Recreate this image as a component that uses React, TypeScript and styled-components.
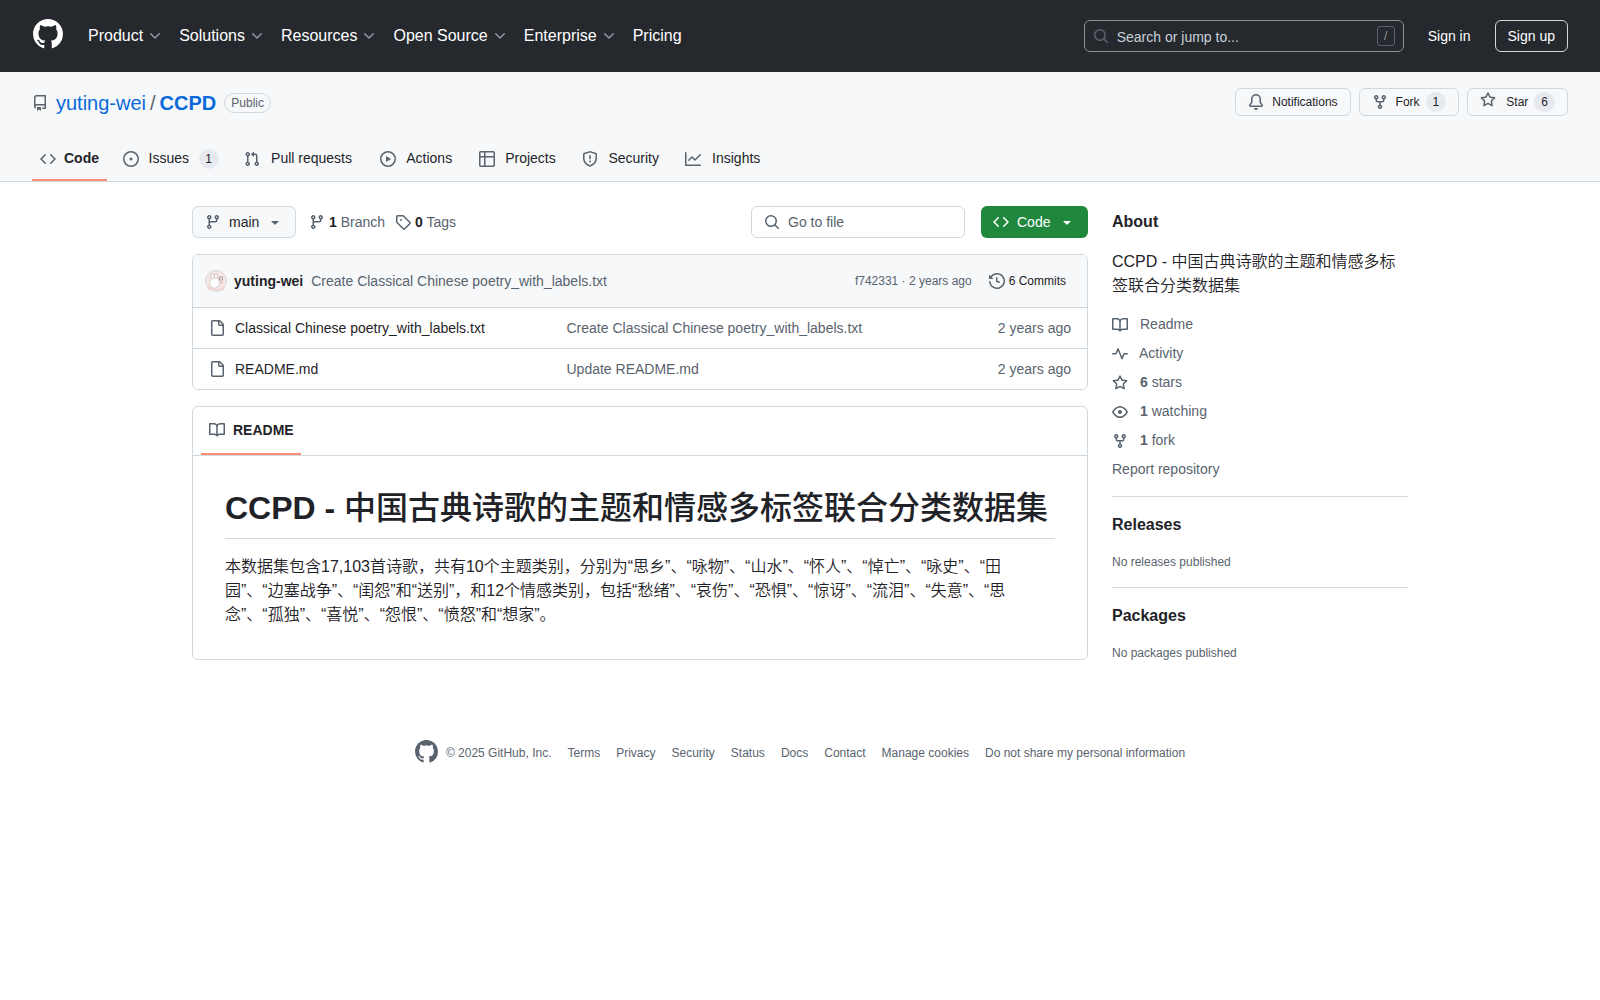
import styled, { createGlobalStyle } from 'styled-components';

const paths: Record<string, string> = {
  mark: 'M8 0c4.42 0 8 3.58 8 8a8.013 8.013 0 0 1-5.45 7.59c-.4.08-.55-.17-.55-.38 0-.27.01-1.13.01-2.2 0-.75-.25-1.23-.54-1.48 1.78-.2 3.65-.88 3.65-3.95 0-.88-.31-1.59-.82-2.15.08-.2.36-1.02-.08-2.12 0 0-.67-.22-2.2.82-.64-.18-1.32-.27-2-.27-.68 0-1.36.09-2 .27-1.53-1.03-2.2-.82-2.2-.82-.44 1.1-.16 1.92-.08 2.12-.51.56-.82 1.28-.82 2.15 0 3.06 1.86 3.75 3.64 3.95-.23.2-.44.55-.51 1.07-.46.21-1.61.55-2.33-.66-.15-.24-.6-.83-1.23-.82-.67.01-.27.38.01.53.34.19.73.9.82 1.13.16.45.68 1.31 2.69.94 0 .67.01 1.3.01 1.49 0 .21-.15.45-.55.38A7.995 7.995 0 0 1 0 8c0-4.42 3.58-8 8-8Z',
  repo: 'M2 2.5A2.5 2.5 0 0 1 4.5 0h8.75a.75.75 0 0 1 .75.75v12.5a.75.75 0 0 1-.75.75h-2.5a.75.75 0 0 1 0-1.5h1.75v-2h-8a1 1 0 0 0-.714 1.7.75.75 0 1 1-1.072 1.05A2.495 2.495 0 0 1 2 11.5Zm10.5-1h-8a1 1 0 0 0-1 1v6.708A2.486 2.486 0 0 1 4.5 9h8ZM5 12.25a.25.25 0 0 1 .25-.25h3.5a.25.25 0 0 1 .25.25v3.25a.25.25 0 0 1-.4.2l-1.45-1.087a.249.249 0 0 0-.3 0L5.4 15.7a.25.25 0 0 1-.4-.2Z',
  code: 'm11.28 3.22 4.25 4.25a.75.75 0 0 1 0 1.06l-4.25 4.25a.749.749 0 0 1-1.275-.326.749.749 0 0 1 .215-.734L13.94 8l-3.72-3.72a.749.749 0 0 1 .326-1.275.749.749 0 0 1 .734.215Zm-6.56 0a.751.751 0 0 1 1.042.018.751.751 0 0 1 .018 1.042L2.06 8l3.72 3.72a.749.749 0 0 1-.326 1.275.749.749 0 0 1-.734-.215L.47 8.53a.75.75 0 0 1 0-1.06Z',
  issue: 'M8 9.5a1.5 1.5 0 1 0 0-3 1.5 1.5 0 0 0 0 3ZM8 0a8 8 0 1 1 0 16A8 8 0 0 1 8 0ZM1.5 8a6.5 6.5 0 1 0 13 0 6.5 6.5 0 0 0-13 0Z',
  pull: 'M1.5 3.25a2.25 2.25 0 1 1 3 2.122v5.256a2.251 2.251 0 1 1-1.5 0V5.372A2.25 2.25 0 0 1 1.5 3.25Zm5.677-.177L9.573.677A.25.25 0 0 1 10 .854V2.5h1A2.5 2.5 0 0 1 13.5 5v5.628a2.251 2.251 0 1 1-1.5 0V5a1 1 0 0 0-1-1h-1v1.646a.25.25 0 0 1-.427.177L7.177 3.427a.25.25 0 0 1 0-.354ZM3.75 2.5a.75.75 0 1 0 0 1.5.75.75 0 0 0 0-1.5Zm0 9.5a.75.75 0 1 0 0 1.5.75.75 0 0 0 0-1.5Zm8.25.75a.75.75 0 1 0 1.5 0 .75.75 0 0 0-1.5 0Z',
  play: 'M8 0a8 8 0 1 1 0 16A8 8 0 0 1 8 0ZM1.5 8a6.5 6.5 0 1 0 13 0 6.5 6.5 0 0 0-13 0Zm4.879-2.773 4.264 2.559a.25.25 0 0 1 0 .428l-4.264 2.559A.25.25 0 0 1 6 10.559V5.442a.25.25 0 0 1 .379-.215Z',
  table: 'M0 1.75C0 .784.784 0 1.75 0h12.5C15.216 0 16 .784 16 1.75v12.5A1.75 1.75 0 0 1 14.25 16H1.75A1.75 1.75 0 0 1 0 14.25ZM6.5 6.5v8h7.75a.25.25 0 0 0 .25-.25V6.5Zm8-1.5V1.75a.25.25 0 0 0-.25-.25H6.5V5Zm-13 1.5v7.75c0 .138.112.25.25.25H5v-8ZM5 5V1.5H1.75a.25.25 0 0 0-.25.25V5Z',
  shield: 'M7.467.133a1.748 1.748 0 0 1 1.066 0l5.25 1.68A1.75 1.75 0 0 1 15 3.48V7c0 1.566-.32 3.182-1.303 4.682-.983 1.498-2.585 2.813-5.032 3.855a1.697 1.697 0 0 1-1.33 0c-2.447-1.042-4.049-2.357-5.032-3.855C1.32 10.182 1 8.566 1 7V3.48a1.75 1.75 0 0 1 1.217-1.667Zm.61 1.429a.25.25 0 0 0-.153 0l-5.25 1.68a.25.25 0 0 0-.174.238V7c0 1.358.275 2.666 1.057 3.86.784 1.194 2.121 2.34 4.366 3.297a.196.196 0 0 0 .154 0c2.245-.956 3.582-2.104 4.366-3.298C13.225 9.666 13.5 8.36 13.5 7V3.48a.251.251 0 0 0-.174-.237l-5.25-1.68ZM8.75 4.75v3a.75.75 0 0 1-1.5 0v-3a.75.75 0 0 1 1.5 0ZM9 10.5a1 1 0 1 1-2 0 1 1 0 0 1 2 0Z',
  graph: 'M1.5 1.75V13.5h13.75a.75.75 0 0 1 0 1.5H.75a.75.75 0 0 1-.75-.75V1.75a.75.75 0 0 1 1.5 0Zm14.28 2.53-5.25 5.25a.75.75 0 0 1-1.06 0L7 7.06 4.28 9.78a.751.751 0 0 1-1.042-.018.751.751 0 0 1-.018-1.042l3.25-3.25a.75.75 0 0 1 1.06 0L10 7.94l4.72-4.72a.751.751 0 0 1 1.042.018.751.751 0 0 1 .018 1.042Z',
  bell: 'M8 16a2 2 0 0 0 1.985-1.75c.017-.137-.097-.25-.235-.25h-3.5c-.138 0-.252.113-.235.25A2 2 0 0 0 8 16ZM3 5a5 5 0 0 1 10 0v2.947c0 .05.015.098.042.139l1.703 2.555A1.519 1.519 0 0 1 13.482 13H2.518a1.516 1.516 0 0 1-1.263-2.36l1.703-2.554A.255.255 0 0 0 3 7.947Zm5-3.5A3.5 3.5 0 0 0 4.5 5v2.947c0 .346-.102.683-.294.97l-1.703 2.556a.017.017 0 0 0-.003.01l.001.006c0 .002.002.004.004.006l.006.004.007.001h10.964l.007-.001.006-.004.004-.006.001-.007a.017.017 0 0 0-.003-.01l-1.703-2.554a1.745 1.745 0 0 1-.294-.97V5A3.5 3.5 0 0 0 8 1.5Z',
  fork: 'M5 5.372v.878c0 .414.336.75.75.75h4.5a.75.75 0 0 0 .75-.75v-.878a2.25 2.25 0 1 1 1.5 0v.878a2.25 2.25 0 0 1-2.25 2.25h-1.5v2.128a2.251 2.251 0 1 1-1.5 0V8.5h-1.5A2.25 2.25 0 0 1 3.5 6.25v-.878a2.25 2.25 0 1 1 1.5 0ZM5 3.25a.75.75 0 1 0-1.5 0 .75.75 0 0 0 1.5 0Zm6.75.75a.75.75 0 1 0 0-1.5.75.75 0 0 0 0 1.5Zm-3 8.75a.75.75 0 1 0-1.5 0 .75.75 0 0 0 1.5 0Z',
  star: 'M8 .25a.75.75 0 0 1 .673.418l1.882 3.815 4.21.612a.75.75 0 0 1 .416 1.279l-3.046 2.97.719 4.192a.751.751 0 0 1-1.088.791L8 12.347l-3.766 1.98a.75.75 0 0 1-1.088-.79l.72-4.194L.818 6.374a.75.75 0 0 1 .416-1.28l4.21-.611L7.327.668A.75.75 0 0 1 8 .25Zm0 2.445L6.615 5.5a.75.75 0 0 1-.564.41l-3.097.45 2.24 2.184a.75.75 0 0 1 .216.664l-.528 3.084 2.769-1.456a.75.75 0 0 1 .698 0l2.77 1.456-.53-3.084a.75.75 0 0 1 .216-.664l2.24-2.183-3.096-.45a.75.75 0 0 1-.564-.41L8 2.694Z',
  branch: 'M9.5 3.25a2.25 2.25 0 1 1 3 2.122V6A2.5 2.5 0 0 1 10 8.5H6a1 1 0 0 0-1 1v1.128a2.251 2.251 0 1 1-1.5 0V5.372a2.25 2.25 0 1 1 1.5 0v1.836A2.493 2.493 0 0 1 6 7h4a1 1 0 0 0 1-1v-.628A2.25 2.25 0 0 1 9.5 3.25Zm-6 0a.75.75 0 1 0 1.5 0 .75.75 0 0 0-1.5 0Zm8.25-.75a.75.75 0 1 0 0 1.5.75.75 0 0 0 0-1.5ZM4.25 12a.75.75 0 1 0 0 1.5.75.75 0 0 0 0-1.5Z',
  tag: 'M1 7.775V2.75C1 1.784 1.784 1 2.75 1h5.025c.464 0 .91.184 1.238.513l6.25 6.25a1.75 1.75 0 0 1 0 2.474l-5.026 5.026a1.75 1.75 0 0 1-2.474 0l-6.25-6.25A1.752 1.752 0 0 1 1 7.775Zm1.5 0c0 .066.026.13.073.177l6.25 6.25a.25.25 0 0 0 .354 0l5.025-5.025a.25.25 0 0 0 0-.354l-6.25-6.25a.25.25 0 0 0-.177-.073H2.75a.25.25 0 0 0-.25.25ZM6 5a1 1 0 1 1 0 2 1 1 0 0 1 0-2Z',
  search: 'M10.68 11.74a6 6 0 0 1-7.922-8.982 6 6 0 0 1 8.982 7.922l3.04 3.04a.749.749 0 0 1-.326 1.275.749.749 0 0 1-.734-.215ZM11.5 7a4.499 4.499 0 1 0-8.997 0A4.499 4.499 0 0 0 11.5 7Z',
  history: 'm.427 1.927 1.215 1.215a8.002 8.002 0 1 1-1.6 5.685.75.75 0 1 1 1.493-.154 6.5 6.5 0 1 0 1.18-4.458l1.358 1.358A.25.25 0 0 1 3.896 6H.25A.25.25 0 0 1 0 5.75V2.104a.25.25 0 0 1 .427-.177ZM7.75 4a.75.75 0 0 1 .75.75v2.992l2.028.812a.75.75 0 0 1-.557 1.392l-2.5-1A.751.751 0 0 1 7 8.25v-3.5A.75.75 0 0 1 7.75 4Z',
  file: 'M2 1.75C2 .784 2.784 0 3.75 0h6.586c.464 0 .909.184 1.237.513l2.914 2.914c.329.328.513.773.513 1.237v9.586A1.75 1.75 0 0 1 13.25 16h-9.5A1.75 1.75 0 0 1 2 14.25Zm1.75-.25a.25.25 0 0 0-.25.25v12.5c0 .138.112.25.25.25h9.5a.25.25 0 0 0 .25-.25V6h-2.75A1.75 1.75 0 0 1 9 4.25V1.5Zm6.75.062V4.25c0 .138.112.25.25.25h2.688l-.011-.013-2.914-2.914-.013-.011Z',
  book: 'M0 1.75A.75.75 0 0 1 .75 1h4.253c1.227 0 2.317.59 3 1.501A3.743 3.743 0 0 1 11.006 1h4.245a.75.75 0 0 1 .75.75v10.5a.75.75 0 0 1-.75.75h-4.507a2.25 2.25 0 0 0-1.591.659l-.622.621a.75.75 0 0 1-1.06 0l-.622-.621A2.25 2.25 0 0 0 5.258 13H.75a.75.75 0 0 1-.75-.75Zm7.251 10.324.004-5.073-.002-2.253A2.25 2.25 0 0 0 5.003 2.5H1.5v9h3.757a3.75 3.75 0 0 1 1.994.574ZM8.755 4.75l-.004 7.322a3.752 3.752 0 0 1 1.992-.572H14.5v-9h-3.495a2.25 2.25 0 0 0-2.25 2.25Z',
  pulse: 'M6 2c.306 0 .582.187.696.471L10 10.731l1.304-3.26A.751.751 0 0 1 12 7h3.25a.75.75 0 0 1 0 1.5h-2.742l-1.812 4.528a.751.751 0 0 1-1.392 0L6 4.77 4.696 8.03A.75.75 0 0 1 4 8.5H.75a.75.75 0 0 1 0-1.5h2.742l1.812-4.529A.751.751 0 0 1 6 2Z',
  eye: 'M8 2c1.981 0 3.671.992 4.933 2.078 1.27 1.091 2.187 2.345 2.637 3.023a1.62 1.62 0 0 1 0 1.798c-.45.678-1.367 1.932-2.637 3.023C11.67 13.008 9.981 14 8 14c-1.981 0-3.671-.992-4.933-2.078C1.797 10.83.88 9.576.43 8.898a1.62 1.62 0 0 1 0-1.798c.45-.677 1.367-1.931 2.637-3.022C4.33 2.992 6.019 2 8 2ZM1.679 7.932a.12.12 0 0 0 0 .136c.411.622 1.241 1.75 2.366 2.717C5.176 11.758 6.527 12.5 8 12.5c1.473 0 2.825-.742 3.955-1.715 1.124-.967 1.954-2.096 2.366-2.717a.12.12 0 0 0 0-.136c-.412-.621-1.242-1.75-2.366-2.717C10.824 4.242 9.473 3.5 8 3.5c-1.473 0-2.825.742-3.955 1.715-1.124.967-1.954 2.096-2.366 2.717ZM8 10a2 2 0 1 1-.001-3.999A2 2 0 0 1 8 10Z',
  chevron: 'M12.78 5.22a.749.749 0 0 1 0 1.06l-4.25 4.25a.749.749 0 0 1-1.06 0L3.22 6.28a.749.749 0 1 1 1.06-1.06L8 8.939l3.72-3.719a.749.749 0 0 1 1.06 0Z',
  caret: 'm4.427 7.427 3.396 3.396a.25.25 0 0 0 .354 0l3.396-3.396A.25.25 0 0 0 11.396 7H4.604a.25.25 0 0 0-.177.427Z',
};

type IconProps = {
  name: string;
  size?: number;
  color?: string;
};

const Icon = ({ name, size = 16, color = 'currentColor' }: IconProps) => (
  <IconSvg viewBox="0 0 16 16" width={size} height={size} fill={color}>
    <path d={paths[name]} />
  </IconSvg>
);

const Avatar = () => (
  <AvatarSvg viewBox="0 0 22 22" width={22} height={22}>
    <circle cx="11" cy="11" r="10.5" fill="#f6e6e6" stroke="#dcd6d6" />
    <path d="M3 15c4 5 12 6 16 1v4H3Z" fill="#f3cccc" opacity="0.7" />
    <ellipse cx="9.5" cy="12.5" rx="4.8" ry="5.6" fill="#fff" stroke="#c6b8b8" strokeWidth="0.6" />
    <ellipse cx="7.5" cy="6.5" rx="1.6" ry="2.6" fill="#fff" stroke="#b5a8a8" strokeWidth="0.6" />
    <ellipse cx="11" cy="6.2" rx="1.5" ry="2.4" fill="#fff" stroke="#b5a8a8" strokeWidth="0.6" />
    <rect x="14.5" y="7" width="3" height="3" fill="none" stroke="#8f8585" strokeWidth="0.7" />
    <circle cx="16.5" cy="12.5" r="1.1" fill="#e9a9a0" />
  </AvatarSvg>
);

const navItems = ['Product', 'Solutions', 'Resources', 'Open Source', 'Enterprise'];

const tabs = [
  { icon: 'code', label: 'Code', active: true },
  { icon: 'issue', label: 'Issues', count: '1' },
  { icon: 'pull', label: 'Pull requests' },
  { icon: 'play', label: 'Actions' },
  { icon: 'table', label: 'Projects' },
  { icon: 'shield', label: 'Security' },
  { icon: 'graph', label: 'Insights' },
];

const files = [
  {
    name: 'Classical Chinese poetry_with_labels.txt',
    message: 'Create Classical Chinese poetry_with_labels.txt',
  },
  { name: 'README.md', message: 'Update README.md' },
];

const footerLinks = [
  'Terms',
  'Privacy',
  'Security',
  'Status',
  'Docs',
  'Contact',
  'Manage cookies',
  'Do not share my personal information',
];

const App = () => {
  return (
    <>
      <GlobalStyle />
      <Header>
        <Logo>
          <Icon name="mark" size={30} color="#fff" />
        </Logo>
        <NavList>
          {navItems.map((item) => (
            <NavItem key={item}>
              {item}
              <Icon name="chevron" size={16} color="#9198a1" />
            </NavItem>
          ))}
          <NavItem>Pricing</NavItem>
        </NavList>
        <SearchBox>
          <Icon name="search" color="#59636e" />
          <SearchText>Search or jump to...</SearchText>
          <SlashKey>/</SlashKey>
        </SearchBox>
        <SignIn>Sign in</SignIn>
        <SignUp>Sign up</SignUp>
      </Header>

      <RepoHead>
        <RepoTitleRow>
          <RepoName>
            <Icon name="repo" color="#59636e" />
            <OwnerLink>yuting-wei</OwnerLink>
            <Slash>/</Slash>
            <RepoLink>CCPD</RepoLink>
            <PublicLabel>Public</PublicLabel>
          </RepoName>
          <RepoActions>
            <ActionButton>
              <Icon name="bell" color="#59636e" />
              Notifications
            </ActionButton>
            <ActionButton>
              <Icon name="fork" color="#59636e" />
              Fork
              <ActionCount>1</ActionCount>
            </ActionButton>
            <ActionButton>
              <StarIcon>
                <Icon name="star" color="#59636e" />
              </StarIcon>
              <StarLabel>Star</StarLabel>
              <ActionCount>6</ActionCount>
            </ActionButton>
          </RepoActions>
        </RepoTitleRow>
        <TabBar>
          {tabs.map((tab) => (
            <Tab key={tab.label} $active={tab.active}>
              <Icon name={tab.icon} color="#59636e" />
              <TabLabel data-content={tab.label} $active={tab.active}>
                {tab.label}
              </TabLabel>
              {tab.count && <TabCount>{tab.count}</TabCount>}
            </Tab>
          ))}
        </TabBar>
      </RepoHead>

      <Layout>
        <Main>
          <FileNav>
            <BranchButton>
              <Icon name="branch" color="#59636e" />
              <span>main</span>
              <Icon name="caret" color="#59636e" />
            </BranchButton>
            <RefLink>
              <Icon name="branch" color="#59636e" />
              <span>
                <strong>1</strong> Branch
              </span>
            </RefLink>
            <RefLink>
              <Icon name="tag" color="#59636e" />
              <span>
                <strong>0</strong> Tags
              </span>
            </RefLink>
            <GoToFile>
              <Icon name="search" color="#59636e" />
              Go to file
            </GoToFile>
            <CodeButton>
              <Icon name="code" color="#fff" />
              <span>Code</span>
              <Icon name="caret" color="#fff" />
            </CodeButton>
          </FileNav>

          <FileBox>
            <CommitRow>
              <Avatar />
              <CommitAuthor>yuting-wei</CommitAuthor>
              <CommitMessage>Create Classical Chinese poetry_with_labels.txt</CommitMessage>
              <CommitMeta>f742331 · 2 years ago</CommitMeta>
              <CommitCount>
                <Icon name="history" color="#59636e" />
                6 Commits
              </CommitCount>
            </CommitRow>
            {files.map((file) => (
              <FileRow key={file.name}>
                <Icon name="file" color="#59636e" />
                <FileName>{file.name}</FileName>
                <FileMessage>{file.message}</FileMessage>
                <FileAge>2 years ago</FileAge>
              </FileRow>
            ))}
          </FileBox>

          <ReadmeBox>
            <ReadmeTabs>
              <ReadmeTab>
                <Icon name="book" color="#59636e" />
                README
              </ReadmeTab>
            </ReadmeTabs>
            <Article>
              <ArticleTitle>
                <TitleLatin>CCPD -</TitleLatin> 中国古典诗歌的主题和情感多标签联合分类数据集
              </ArticleTitle>
              <ArticleText>
                本数据集包含17,103首诗歌，共有10个主题类别，分别为“思乡”、“咏物”、“山水”、“怀人”、“悼亡”、“咏史”、“田园”、“边塞战争”、“闺怨”和“送别”，和12个情感类别，包括“愁绪”、“哀伤”、“恐惧”、“惊讶”、“流泪”、“失意”、“思念”、“孤独”、“喜悦”、“怨恨”、“愤怒”和“想家”。
              </ArticleText>
            </Article>
          </ReadmeBox>
        </Main>

        <Sidebar>
          <SideSection>
            <SideHeading>About</SideHeading>
            <AboutText>CCPD - 中国古典诗歌的主题和情感多标签联合分类数据集</AboutText>
            <SideLinks>
              <SideLink>
                <Icon name="book" color="#59636e" />
                <SideLabel>Readme</SideLabel>
              </SideLink>
              <SideLink>
                <Icon name="pulse" color="#59636e" />
                <SideLabel $tight>Activity</SideLabel>
              </SideLink>
              <SideLink>
                <Icon name="star" color="#59636e" />
                <SideLabel>
                  <strong>6</strong> stars
                </SideLabel>
              </SideLink>
              <SideLink>
                <Icon name="eye" color="#59636e" />
                <SideLabel>
                  <strong>1</strong> watching
                </SideLabel>
              </SideLink>
              <SideLink>
                <Icon name="fork" color="#59636e" />
                <SideLabel>
                  <strong>1</strong> fork
                </SideLabel>
              </SideLink>
              <SideLink>Report repository</SideLink>
            </SideLinks>
          </SideSection>
          <SideSection>
            <SideHeading>Releases</SideHeading>
            <SideNote>No releases published</SideNote>
          </SideSection>
          <SideSection>
            <SideHeading>Packages</SideHeading>
            <SideNote>No packages published</SideNote>
          </SideSection>
        </Sidebar>
      </Layout>

      <Footer>
        <FooterMark>
          <Icon name="mark" size={23} color="#59636e" />
        </FooterMark>
        <span>© 2025 GitHub, Inc.</span>
        {footerLinks.map((link) => (
          <span key={link}>{link}</span>
        ))}
      </Footer>
    </>
  );
};

export default App;

const GlobalStyle = createGlobalStyle`
  * {
    box-sizing: border-box;
  }

  body {
    margin: 0;
    background: #fff;
    color: #1f2328;
    font-family: "Liberation Sans", "Noto Sans CJK SC", sans-serif;
    font-size: 14px;
    line-height: 1.5;
  }
`;

const IconSvg = styled.svg`
  display: block;
  flex-shrink: 0;
`;

const AvatarSvg = styled.svg`
  display: block;
  flex-shrink: 0;
`;

const Header = styled.header`
  display: flex;
  align-items: center;
  height: 72px;
  padding: 0 32px;
  background: #25292e;
  color: #fff;
`;

const Logo = styled.div`
  margin: 0 17px 4px 1px;
`;

const NavList = styled.nav`
  display: flex;
  flex: 1;
`;

const NavItem = styled.div`
  display: flex;
  align-items: center;
  gap: 4px;
  padding: 0 8px;
  font-size: 16px;
  white-space: nowrap;
`;

const SearchBox = styled.div`
  display: flex;
  align-items: center;
  width: 320px;
  height: 32px;
  padding: 0 8px;
  border: 1px solid #868e96;
  border-radius: 6px;
  color: #c9d1d9;
`;

const SearchText = styled.span`
  flex: 1;
  margin-top: 2px;
  margin-left: 8px;
`;

const SlashKey = styled.span`
  display: flex;
  align-items: center;
  justify-content: center;
  width: 18px;
  height: 20px;
  border: 1px solid #59636e;
  border-radius: 3px;
  color: #9198a1;
  font-size: 12px;
`;

const SignIn = styled.div`
  margin: 0 24px;
`;

const SignUp = styled.div`
  display: flex;
  align-items: center;
  height: 32px;
  padding: 0 12px;
  border: 1px solid #d1d9e0;
  border-radius: 6px;
`;

const RepoHead = styled.div`
  height: 110px;
  padding: 16px 32px 0;
  background: #f6f8fa;
  border-bottom: 1px solid #d1d9e0;
`;

const RepoTitleRow = styled.div`
  display: flex;
  align-items: center;
  justify-content: space-between;
  height: 28px;
`;

const RepoName = styled.div`
  display: flex;
  align-items: center;
  margin-top: 2px;
  font-size: 20px;
`;

const OwnerLink = styled.span`
  margin-left: 8px;
  color: #0969da;
`;

const Slash = styled.span`
  margin: 0 4px;
  color: #59636e;
`;

const RepoLink = styled.span`
  color: #0969da;
  font-weight: 700;
`;

const PublicLabel = styled.span`
  display: flex;
  align-items: center;
  height: 20px;
  margin-left: 8px;
  padding: 0 6px;
  border: 1px solid #d1d9e0;
  border-radius: 10px;
  color: #59636e;
  font-size: 12px;
`;

const RepoActions = styled.div`
  display: flex;
  gap: 8px;
`;

const ActionButton = styled.div`
  display: flex;
  align-items: center;
  gap: 8px;
  height: 28px;
  padding: 0 12px;
  background: #f6f8fa;
  border: 1px solid #d1d9e0;
  border-radius: 6px;
  font-size: 12px;
`;

const StarIcon = styled.span`
  margin-top: -4px;
`;

const StarLabel = styled.span`
  margin-left: 2px;
`;

const ActionCount = styled.span`
  display: flex;
  align-items: center;
  height: 20px;
  padding: 0 7px;
  margin-left: -2px;
  background: #e6eaef;
  border-radius: 10px;
`;

const TabBar = styled.nav`
  display: flex;
  gap: 8px;
  height: 43px;
  margin-top: 22px;
`;

const Tab = styled.div<{ $active?: boolean }>`
  display: flex;
  align-items: center;
  gap: 8px;
  padding: 0 8px;
  height: 43px;
  border-bottom: 2px solid ${(p) => (p.$active ? '#fd8c73' : 'transparent')};
`;

const TabLabel = styled.span<{ $active?: boolean }>`
  display: inline-flex;
  flex-direction: column;
  align-items: center;
  font-weight: ${(p) => (p.$active ? 700 : 400)};

  &::before {
    content: attr(data-content);
    height: 0;
    overflow: hidden;
    visibility: hidden;
    font-weight: 700;
  }
`;

const TabCount = styled.span`
  display: flex;
  align-items: center;
  justify-content: center;
  min-width: 20px;
  height: 20px;
  margin-right: 1px;
  background: #e6eaef;
  border-radius: 10px;
  font-size: 12px;
`;

const Layout = styled.div`
  display: grid;
  grid-template-columns: 896px 296px;
  gap: 24px;
  width: 1216px;
  margin: 0 auto;
  padding-top: 24px;
`;

const Main = styled.main`
  display: flex;
  flex-direction: column;
`;

const FileNav = styled.div`
  display: flex;
  align-items: center;
  height: 32px;
`;

const BranchButton = styled.div`
  display: flex;
  align-items: center;
  gap: 8px;
  width: 104px;
  height: 32px;
  padding: 0 12px;
  margin-right: 8px;
  background: #f6f8fa;
  border: 1px solid #d1d9e0;
  border-radius: 6px;
`;

const RefLink = styled.div`
  display: flex;
  align-items: center;
  gap: 4px;
  padding: 0 5px;
  color: #59636e;

  strong {
    color: #1f2328;
  }
`;

const GoToFile = styled.div`
  display: flex;
  align-items: center;
  gap: 8px;
  width: 214px;
  height: 32px;
  padding: 0 12px;
  margin-left: auto;
  border: 1px solid #d1d9e0;
  border-radius: 6px;
  color: #59636e;
`;

const CodeButton = styled.div`
  display: flex;
  align-items: center;
  gap: 8px;
  width: 107px;
  height: 32px;
  padding: 0 13px 0 12px;
  margin-left: 16px;
  background: #1f883d;
  border-radius: 6px;
  color: #fff;

  span {
    margin-right: 1px;
  }
`;

const FileBox = styled.div`
  margin-top: 16px;
  border: 1px solid #d1d9e0;
  border-radius: 6px;
  overflow: hidden;
`;

const CommitRow = styled.div`
  display: flex;
  align-items: center;
  height: 52px;
  padding: 0 21px 0 12px;
  background: #f6f8fa;
`;

const CommitAuthor = styled.span`
  margin-left: 7px;
  font-weight: 700;
`;

const CommitMessage = styled.span`
  flex: 1;
  margin-left: 8px;
  color: #59636e;
`;

const CommitMeta = styled.span`
  color: #59636e;
  font-size: 12px;
`;

const CommitCount = styled.span`
  display: flex;
  align-items: center;
  gap: 4px;
  margin-left: 17px;
  font-size: 12px;
`;

const FileRow = styled.div`
  display: flex;
  align-items: center;
  height: 41px;
  padding: 0 16px;
  border-top: 1px solid #d1d9e0;
`;

const FileName = styled.span`
  width: 331.5px;
  margin-left: 10px;
`;

const FileMessage = styled.span`
  flex: 1;
  color: #59636e;
`;

const FileAge = styled.span`
  color: #59636e;
`;

const ReadmeBox = styled.section`
  margin-top: 16px;
  border: 1px solid #d1d9e0;
  border-radius: 6px;
`;

const ReadmeTabs = styled.div`
  height: 49px;
  padding-left: 8px;
  border-bottom: 1px solid #d1d9e0;
`;

const ReadmeTab = styled.div`
  display: flex;
  align-items: center;
  gap: 8px;
  width: 100px;
  height: 48px;
  padding-left: 8px;
  border-bottom: 2px solid #fd8c73;
  font-weight: 700;
`;

const Article = styled.article`
  padding: 32px;
`;

const ArticleTitle = styled.h1`
  margin: 0 0 16px;
  padding-bottom: 10px;
  border-bottom: 1px solid #d1d9e0;
  font-size: 32px;
  font-weight: 500;
  line-height: 1.25;
  white-space: nowrap;
`;

const TitleLatin = styled.span`
  font-weight: 700;
`;

const ArticleText = styled.p`
  margin: 0;
  font-size: 16px;
  font-weight: 350;
  line-height: 24px;
`;

const Sidebar = styled.aside`
  display: flex;
  flex-direction: column;
  padding-top: 4px;
`;

const SideSection = styled.section`
  padding-bottom: 16px;
  margin-bottom: 16px;
  border-bottom: 1px solid #d1d9e0;

  &:last-child {
    border-bottom: 0;
    margin-bottom: 0;
  }
`;

const SideHeading = styled.h2`
  margin: 0 0 16px;
  font-size: 16px;
  font-weight: 700;
  line-height: 24px;
`;

const AboutText = styled.p`
  margin: 0 0 16px;
  font-size: 16px;
  font-weight: 350;
  line-height: 24px;
`;

const SideLinks = styled.div`
  display: flex;
  flex-direction: column;
  gap: 8px;
`;

const SideLink = styled.div`
  display: flex;
  align-items: center;
  height: 21px;
  color: #59636e;
`;

const SideLabel = styled.span<{ $tight?: boolean }>`
  margin-left: ${(p) => (p.$tight ? 11 : 12)}px;
`;

const SideNote = styled.div`
  color: #59636e;
  font-size: 12px;
`;

const Footer = styled.footer`
  display: flex;
  align-items: center;
  justify-content: center;
  gap: 16px;
  margin-top: 62px;
  color: #59636e;
  font-size: 12px;
`;

const FooterMark = styled.div`
  margin: 0 -8px 3px 0;
`;
